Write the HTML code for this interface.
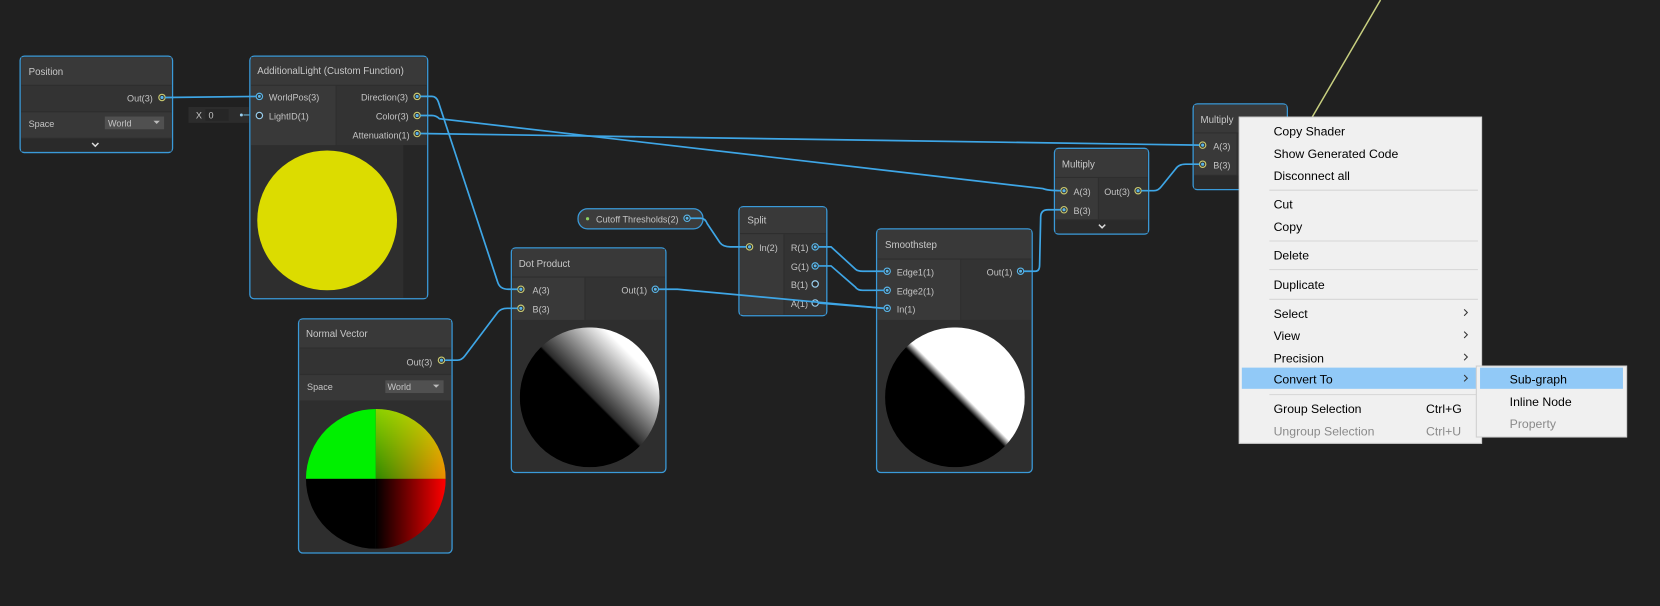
<!DOCTYPE html>
<html><head><meta charset="utf-8"><style>
html,body{margin:0;padding:0;background:#202020;overflow:hidden}
svg{display:block}
text{font-family:"Liberation Sans",sans-serif}
.t{fill:#c4c4c4;font-size:8.6px}
.h{fill:#c8c8c8;font-size:9.2px}
.m{fill:#000;font-size:11.6px}
.md{fill:#8a8a8a;font-size:11.6px}
.w{fill:none;stroke:#3ea6e6;stroke-width:1.6}
</style></head><body>
<svg width="1660" height="606" viewBox="0 0 1568 572" preserveAspectRatio="none" xmlns="http://www.w3.org/2000/svg">
<defs>
<clipPath id="c1"><circle cx="557" cy="375" r="66"/></clipPath>
<clipPath id="c2"><circle cx="902" cy="375" r="66"/></clipPath>
<clipPath id="c3"><circle cx="355" cy="452" r="66"/></clipPath>
<linearGradient id="gdot" x1="0" y1="1" x2="1" y2="0">
<stop offset="0.5" stop-color="#000"/><stop offset="0.51" stop-color="#2a2a2a"/><stop offset="0.8" stop-color="#fff"/></linearGradient>
<linearGradient id="gsm" x1="0" y1="1" x2="1" y2="0">
<stop offset="0.5" stop-color="#000"/><stop offset="0.54" stop-color="#fff"/></linearGradient>
<linearGradient id="gtr" x1="0" y1="0" x2="1" y2="0"><stop offset="0" stop-color="#2e8a00"/><stop offset="1" stop-color="#f08c00"/></linearGradient>
<linearGradient id="gtr2" x1="0" y1="0" x2="0" y2="1"><stop offset="0" stop-color="#c8ff00" stop-opacity="0.6"/><stop offset="1" stop-color="#c8ff00" stop-opacity="0"/></linearGradient>
<linearGradient id="gbr" x1="0" y1="0" x2="1" y2="0"><stop offset="0" stop-color="#000"/><stop offset="1" stop-color="#ff0000"/></linearGradient>
<g id="p"><circle r="3" fill="#2a2a2a" stroke="#5ab4e6" stroke-width="1.1"/><circle r="1.4" fill="#5ab4e6"/></g>
<g id="py"><circle r="3" fill="#2a2a2a" stroke="#c8c870" stroke-width="1.1"/><circle r="1.5" fill="#5ab4e6"/></g>
<g id="pe"><circle r="3" fill="#2a2a2a" stroke="#9ad0f0" stroke-width="1.1"/></g>
</defs>

<line x1="1304" y1="0" x2="1238" y2="113" stroke="#c8d080" stroke-width="1.4"/>

<rect x="19" y="53" width="144" height="91" rx="4" fill="#2e2e2e" stroke="#3a9ad9" stroke-width="1.2"/>
<rect x="20" y="54" width="142" height="26" fill="#393939"/>
<text x="27" y="71" class="h">Position</text>
<rect x="20" y="81" width="142" height="24" fill="#333"/>
<text x="120" y="96" class="t">Out(3)</text><use href="#py" x="153" y="92"/>
<rect x="20" y="106" width="142" height="24" fill="#383838"/>
<text x="27" y="120" class="t">Space</text>
<rect x="99" y="110" width="56" height="12" fill="#505050"/>
<text x="102" y="119.5" class="t" fill="#ddd">World</text>
<path d="M145 114l3 3 3-3z" fill="#bbb"/>
<rect x="20" y="131" width="142" height="12" fill="#2a2a2a"/>
<path d="M87 135l3 3 3-3" fill="none" stroke="#ddd" stroke-width="1.4"/>

<rect x="178" y="101" width="57" height="15" fill="#2c2c2c"/>
<text x="185" y="112" class="t">X</text>
<rect x="194" y="103" width="22" height="11" fill="#262626"/>
<text x="197" y="112" class="t">0</text>
<circle cx="228" cy="108.5" r="1.4" fill="#9ad0f0"/>
<line x1="230" y1="108.5" x2="243" y2="108.5" stroke="#5a8ea8" stroke-width="1.4"/>

<rect x="236" y="53" width="168" height="229" rx="4" fill="#2e2e2e" stroke="#3a9ad9" stroke-width="1.2"/>
<rect x="237" y="54" width="166" height="26" fill="#393939"/>
<text x="243" y="70" class="h">AdditionalLight (Custom Function)</text>
<rect x="237" y="81" width="80" height="56" fill="#393939"/>
<rect x="318" y="81" width="85" height="56" fill="#333"/>
<rect x="381" y="137" width="22" height="144" fill="#262626"/>
<use href="#p" x="245" y="91"/><text x="254" y="95" class="t">WorldPos(3)</text>
<use href="#pe" x="245" y="109"/><text x="254" y="113" class="t">LightID(1)</text>
<text x="341" y="95" class="t">Direction(3)</text><use href="#py" x="394" y="91"/>
<text x="355" y="113" class="t">Color(3)</text><use href="#py" x="394" y="109"/>
<text x="333" y="130.5" class="t">Attenuation(1)</text><use href="#py" x="394" y="126"/>
<circle cx="309" cy="208" r="66" fill="#dcdc00"/>

<rect x="282" y="301" width="145" height="221" rx="4" fill="#2e2e2e" stroke="#3a9ad9" stroke-width="1.2"/>
<rect x="283" y="302" width="143" height="26" fill="#393939"/>
<text x="289" y="318" class="h">Normal Vector</text>
<rect x="283" y="329" width="143" height="24" fill="#333"/>
<text x="384" y="345" class="t">Out(3)</text><use href="#py" x="417" y="340"/>
<rect x="283" y="354" width="143" height="24" fill="#383838"/>
<text x="290" y="368" class="t">Space</text>
<rect x="364" y="359" width="55" height="12" fill="#505050"/>
<text x="366" y="368" class="t" fill="#ddd">World</text>
<path d="M409 363l3 3 3-3z" fill="#bbb"/>
<g clip-path="url(#c3)">
<rect x="289" y="386" width="66" height="66" fill="#00f000"/>
<rect x="355" y="386" width="66" height="66" fill="url(#gtr)"/>
<rect x="355" y="386" width="66" height="66" fill="url(#gtr2)"/>
<rect x="289" y="452" width="66" height="66" fill="#000"/>
<rect x="355" y="452" width="66" height="66" fill="url(#gbr)"/>
</g>

<rect x="483" y="234" width="146" height="212" rx="4" fill="#2e2e2e" stroke="#3a9ad9" stroke-width="1.2"/>
<rect x="484" y="235" width="144" height="26" fill="#393939"/>
<text x="490" y="252" class="h">Dot Product</text>
<rect x="484" y="262" width="68" height="40" fill="#393939"/>
<rect x="553" y="262" width="75" height="40" fill="#333"/>
<use href="#py" x="492" y="273"/><text x="503" y="277" class="t">A(3)</text>
<use href="#py" x="492" y="291"/><text x="503" y="295" class="t">B(3)</text>
<text x="587" y="277" class="t">Out(1)</text><use href="#p" x="619" y="273"/>
<g clip-path="url(#c1)"><rect x="491" y="309" width="132" height="132" fill="url(#gdot)"/></g>

<rect x="546" y="197" width="118" height="19" rx="9" fill="#3c3c3c" stroke="#3a9ad9" stroke-width="1.2"/>
<circle cx="555" cy="206.5" r="1.5" fill="#8ed060"/>
<text x="563" y="210" class="t">Cutoff Thresholds(2)</text>
<use href="#p" x="649" y="206"/>

<rect x="698" y="195" width="83" height="103" rx="4" fill="#2e2e2e" stroke="#3a9ad9" stroke-width="1.2"/>
<rect x="699" y="196" width="81" height="24" fill="#393939"/>
<text x="706" y="211" class="h">Split</text>
<rect x="699" y="221" width="41" height="76" fill="#393939"/>
<rect x="741" y="221" width="39" height="76" fill="#333"/>
<use href="#py" x="708" y="233"/><text x="717" y="237" class="t">In(2)</text>
<text x="747" y="237" class="t">R(1)</text><use href="#p" x="770" y="233"/>
<text x="747" y="255" class="t">G(1)</text><use href="#p" x="770" y="251"/>
<text x="747" y="272" class="t">B(1)</text><use href="#pe" x="770" y="268"/>
<text x="747" y="290" class="t">A(1)</text><use href="#pe" x="770" y="286"/>

<rect x="828" y="216" width="147" height="230" rx="4" fill="#2e2e2e" stroke="#3a9ad9" stroke-width="1.2"/>
<rect x="829" y="217" width="145" height="27" fill="#393939"/>
<text x="836" y="234" class="h">Smoothstep</text>
<rect x="829" y="245" width="78" height="57" fill="#393939"/>
<rect x="908" y="245" width="66" height="57" fill="#333"/>
<use href="#p" x="838" y="256"/><text x="847" y="260" class="t">Edge1(1)</text>
<use href="#p" x="838" y="274"/><text x="847" y="278" class="t">Edge2(1)</text>
<use href="#p" x="838" y="291"/><text x="847" y="295" class="t">In(1)</text>
<text x="932" y="260" class="t">Out(1)</text><use href="#p" x="964" y="256"/>
<g clip-path="url(#c2)"><rect x="836" y="309" width="132" height="132" fill="url(#gsm)"/></g>

<rect x="996" y="140" width="89" height="81" rx="4" fill="#2e2e2e" stroke="#3a9ad9" stroke-width="1.2"/>
<rect x="997" y="141" width="87" height="26" fill="#393939"/>
<text x="1003" y="158" class="h">Multiply</text>
<rect x="997" y="168" width="40" height="39" fill="#393939"/>
<rect x="1038" y="168" width="46" height="39" fill="#333"/>
<use href="#py" x="1005" y="180"/><text x="1014" y="184" class="t">A(3)</text>
<use href="#py" x="1005" y="198"/><text x="1014" y="202" class="t">B(3)</text>
<text x="1043" y="184" class="t">Out(3)</text><use href="#py" x="1075" y="180"/>
<rect x="997" y="208" width="87" height="12" fill="#2a2a2a"/>
<path d="M1038 212l3 3 3-3" fill="none" stroke="#ddd" stroke-width="1.4"/>

<rect x="1127" y="98" width="89" height="81" rx="4" fill="#2e2e2e" stroke="#3a9ad9" stroke-width="1.2"/>
<rect x="1128" y="99" width="87" height="26" fill="#393939"/>
<text x="1134" y="116" class="h">Multiply</text>
<rect x="1128" y="126" width="40" height="39" fill="#393939"/>
<rect x="1169" y="126" width="46" height="39" fill="#333"/>
<use href="#py" x="1136" y="137"/><text x="1146" y="141" class="t">A(3)</text>
<use href="#py" x="1136" y="155"/><text x="1146" y="159" class="t">B(3)</text>
<rect x="1128" y="166" width="87" height="12" fill="#2a2a2a"/>

<path class="w" d="M156 92 L242 91"/>
<path class="w" d="M397 91 L408 91 Q412 91 414 96 L470 266 Q472 273 480 273 L489 273"/>
<path class="w" d="M397 109 L408 109 Q412 109 415 112 L985 178 Q990 180 1002 180"/>
<path class="w" d="M397 126 L1133 137"/>
<path class="w" d="M420 340 L432 340 Q436 340 439 336 L470 295 Q473 291 479 291 L489 291"/>
<path class="w" d="M622 273 L640 273 L835 291"/>
<path class="w" d="M652 206 L662 206 Q666 206 668 211 L680 229 Q683 233 690 233 L705 233"/>
<path class="w" d="M773 233 L785 233 L808 254 Q810 256 815 256 L835 256"/>
<path class="w" d="M773 251 L785 251 L808 271 Q810 274 815 274 L835 274"/>
<path class="w" d="M773 286 L835 291"/>
<path class="w" d="M967 256 L978 256 Q982 256 982 250 L983 205 Q983 198 990 198 L1002 198"/>
<path class="w" d="M1078 180 L1090 180 Q1094 180 1097 176 L1110 160 Q1113 155 1120 155 L1133 155"/>

<rect x="1170.5" y="110.5" width="229" height="308" fill="#f0f0f0" stroke="#cfcfcf"/>
<text x="1203" y="128" class="m">Copy Shader</text>
<text x="1203" y="149" class="m">Show Generated Code</text>
<text x="1203" y="170" class="m">Disconnect all</text>
<line x1="1199" y1="179.5" x2="1396" y2="179.5" stroke="#d6d6d6"/>
<text x="1203" y="197" class="m">Cut</text>
<text x="1203" y="218" class="m">Copy</text>
<line x1="1199" y1="227.5" x2="1396" y2="227.5" stroke="#d6d6d6"/>
<text x="1203" y="245" class="m">Delete</text>
<line x1="1199" y1="254.5" x2="1396" y2="254.5" stroke="#d6d6d6"/>
<text x="1203" y="273" class="m">Duplicate</text>
<line x1="1199" y1="282.5" x2="1396" y2="282.5" stroke="#d6d6d6"/>
<text x="1203" y="300" class="m">Select</text>
<text x="1203" y="321" class="m">View</text>
<text x="1203" y="342" class="m">Precision</text>
<rect x="1173" y="347" width="222" height="20" fill="#91c9f7"/>
<text x="1203" y="362" class="m">Convert To</text>
<g fill="none" stroke="#333" stroke-width="1"><path d="M1383 292l3 3-3 3"/><path d="M1383 313l3 3-3 3"/><path d="M1383 334l3 3-3 3"/><path d="M1383 354l3 3-3 3"/></g>
<line x1="1199" y1="372.5" x2="1396" y2="372.5" stroke="#d6d6d6"/>
<text x="1203" y="390" class="m">Group Selection</text>
<text x="1347" y="390" class="m">Ctrl+G</text>
<text x="1203" y="411" class="md">Ungroup Selection</text>
<text x="1347" y="411" class="md">Ctrl+U</text>

<rect x="1394.5" y="345.5" width="142" height="67" fill="#f0f0f0" stroke="#cfcfcf"/>
<rect x="1398" y="347" width="135" height="20" fill="#91c9f7"/>
<text x="1426" y="362" class="m">Sub-graph</text>
<text x="1426" y="383" class="m">Inline Node</text>
<text x="1426" y="404" class="md">Property</text>
</svg>
</body></html>
